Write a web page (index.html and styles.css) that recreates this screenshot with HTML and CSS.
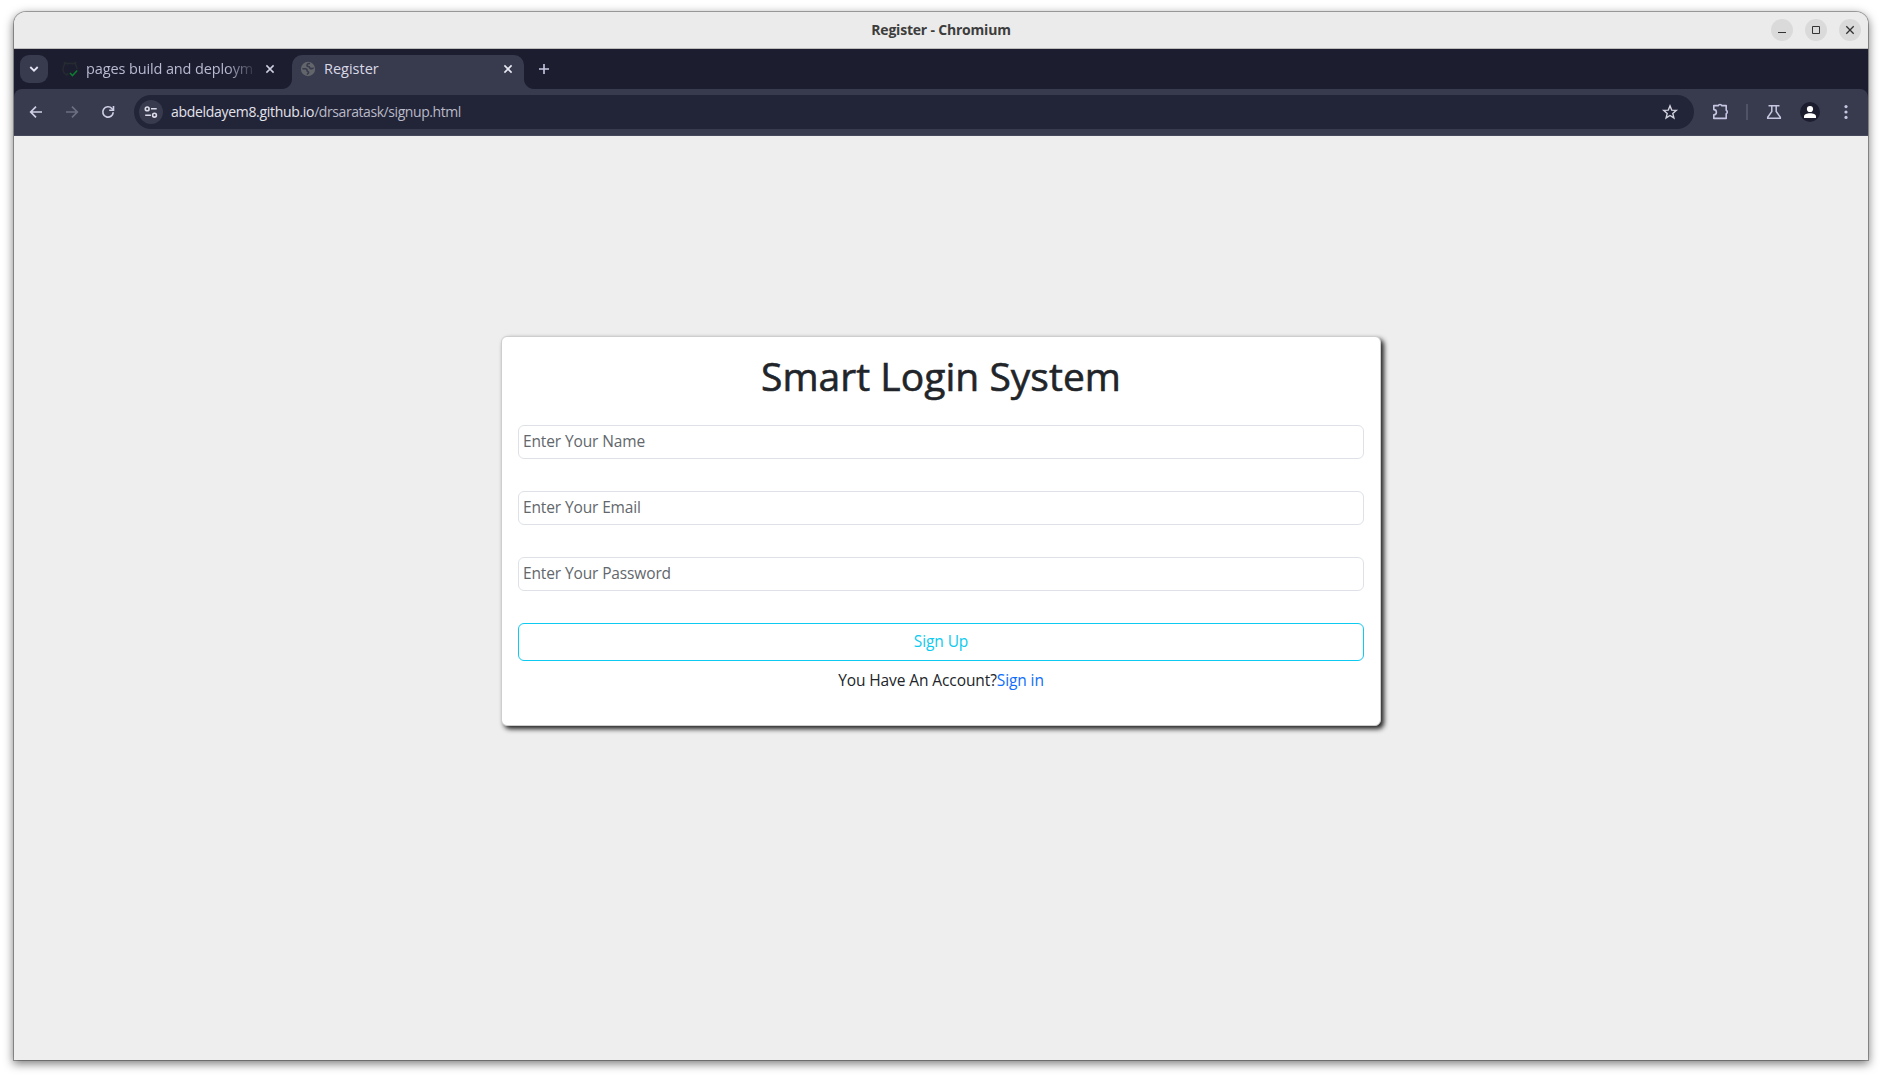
FILE: index.html
```html
<!DOCTYPE html>
<html lang="en">
<head>
<meta charset="utf-8">
<title>Register</title>
<link rel="stylesheet" href="styles.css">
</head>
<body>
<div class="window">
  <header class="titlebar">
    <span class="titlebar-side"></span>
    <span class="titlebar-text">Register - Chromium</span>
    <div class="titlebar-side window-buttons">
      <span class="window-button"><svg width="22" height="22" viewBox="0 0 22 22"><path d="M7 13.5h8" stroke="#333" fill="none"/></svg></span>
      <span class="window-button"><svg width="22" height="22" viewBox="0 0 22 22"><path d="M7.5 7.5h7v7h-7z" stroke="#333" fill="none"/></svg></span>
      <span class="window-button"><svg width="22" height="22" viewBox="0 0 22 22"><path d="M7.3 7.3l7.4 7.4M14.7 7.3l-7.4 7.4" stroke="#333" stroke-width="1.3" fill="none"/></svg></span>
    </div>
  </header>

  <div class="tabstrip">
    <span class="tab-search"><svg width="28" height="28" viewBox="0 0 28 28"><path d="M10.3 12l3.7 3.7 3.7-3.7" stroke="#e4e4f2" stroke-width="1.8" fill="none"/></svg></span>
    <div class="tab tab-inactive">
      <svg class="favicon" width="16" height="16" viewBox="0 0 16 16"><path d="M5.500 14.300v-2.200M5.300 14.300C2.500 13.200 1 10.800 1 8c0-1.800.7-3.200 1.500-4.200V1.700l2.600 1a8 8 0 0 1 5.800 0l2.600-1v2.100c.8 1 1.500 2.400 1.500 4.200" stroke="#262b31" stroke-width="1.500" fill="none"/><path d="M8 12l2.500 2.600 4.700-5" stroke="#0f7b30" stroke-width="1.500" fill="none"/></svg>
      <span class="tab-title">pages build and deploym</span>
      <svg class="tab-close" width="16" height="16" viewBox="0 0 16 16"><path d="M4.400 4.400l7.200 7.200M11.600 4.400l-7.200 7.200" stroke="#cfcfe2" stroke-width="1.500"/></svg>
    </div>
    <div class="tab tab-active">
      <svg class="favicon" width="16" height="16" viewBox="0 0 16 16"><circle cx="8" cy="8" r="7.200" fill="#62656a"/><path d="M10 2.500C8 2.200 7 3.200 7 4.400c0 1.300 1.200.8 2 1.300.9.600.5 1.700 1.700 1.900 1.200.2 1.800-.5 3-.3M2.400 7.800h2.700c1.600 0 2 .9 2 1.900s1.500.4 1.500 1.600c0 1-.9 1.200-1.400 2.300" stroke="#383a4e" stroke-width="1.600" fill="none"/></svg>
      <span class="tab-title">Register</span>
      <svg class="tab-close" width="16" height="16" viewBox="0 0 16 16"><path d="M4.400 4.400l7.200 7.200M11.600 4.400l-7.200 7.200" stroke="#e9e9f3" stroke-width="1.600"/></svg>
    </div>
    <svg class="new-tab" width="16" height="16" viewBox="0 0 16 16"><path d="M3 8h10M8 3v10" stroke="#c9c9e4" stroke-width="1.600"/></svg>
  </div>

  <div class="toolbar-wrap">
  <nav class="toolbar">
    <svg width="20" height="20" viewBox="0 0 20 20"><path d="M16 10H5M10 4.700L4.700 10l5.300 5.300" stroke="#cfcfe6" stroke-width="1.700" fill="none"/></svg>
    <svg width="20" height="20" viewBox="0 0 20 20"><path d="M4 10h11M10 4.700l5.300 5.300-5.300 5.300" stroke="#6c6e80" stroke-width="1.700" fill="none"/></svg>
    <svg width="20" height="20" viewBox="0 0 20 20"><path d="M15.200 10.200A5.200 5.200 0 1 1 13.900 6.500l1.500 1.500" stroke="#cfcfe6" stroke-width="1.700" fill="none"/><path d="M15.500 4v4.300h-4.300" stroke="#cfcfe6" stroke-width="1.600" fill="none"/></svg>
    <div class="omnibox">
      <span class="site-info"><svg width="24" height="24" viewBox="0 0 24 24"><g stroke="#dcdce9" stroke-width="1.600" fill="none"><circle cx="8.200" cy="8.900" r="1.900"/><path d="M12 8.800h5.700M6.200 15.200h5.700"/><circle cx="15.500" cy="15.200" r="1.900"/></g></svg></span>
      <span class="url"><span class="url-host">abdeldayem8.github.io</span><span class="url-path">/drsaratask/signup.html</span></span>
      <svg width="18" height="18" viewBox="0 0 18 18"><path d="M9 2.800l1.700 4.300 4.600.3-3.500 3 1.100 4.500L9 12.500l-3.900 2.400 1.100-4.500-3.500-3 4.600-.3z" stroke="#d3d3df" stroke-width="1.400" fill="none"/></svg>
    </div>
    <div class="actions">
      <svg width="20" height="20" viewBox="0 0 20 20"><path d="M3.800 3.600h4.400a1.900 1.600 0 0 1 3.600 0h4.400v4.600a1.600 1.900 0 0 1 0 3.600V16.400H3.800v-3.600a2.600 2.600 0 0 0 0-5.200z" stroke="#c6c6e2" stroke-width="1.600" stroke-linejoin="round" fill="none"/></svg>
      <span class="divider"></span>
      <svg width="20" height="20" viewBox="0 0 20 20"><path d="M4.500 3.800h11M7.800 4v5.500L3.700 15.200v1.100h12.600v-1.100L12.200 9.500V4" stroke="#c6c6e2" stroke-width="1.500" fill="none"/></svg>
      <svg width="20" height="20" viewBox="0 0 20 20"><circle cx="10" cy="10" r="10" fill="#1c1e30"/><circle cx="10" cy="7" r="3.100" fill="#fff"/><path d="M4 16v-1.500c0-2.200 3-3.300 6-3.300s6 1.100 6 3.300V16z" fill="#fff"/></svg>
      <svg width="20" height="20" viewBox="0 0 20 20" fill="#c6c6e2"><circle cx="10" cy="4.600" r="1.600"/><circle cx="10" cy="10" r="1.600"/><circle cx="10" cy="15.400" r="1.600"/></svg>
    </div>
  </nav>
  </div>

  <main class="page">
    <form class="card">
      <h1>Smart Login System</h1>
      <input type="text" placeholder="Enter Your Name">
      <input type="email" placeholder="Enter Your Email">
      <input type="password" placeholder="Enter Your Password">
      <button type="button">Sign Up</button>
      <p>You Have An Account?<a href="#">Sign in</a></p>
    </form>
  </main>
</div>
</body>
</html>
```
FILE: styles.css
```css
* { box-sizing: border-box; }
body {
  margin: 0;
  height: 1077px;
  padding: 12px 14px 17px;
  background: #fff;
  overflow: hidden;
  font-family: "Open Sans", "Noto Sans", sans-serif;
}
svg { display: block; flex: none; }
.window {
  height: 1048px;
  width: 1854px;
  display: flex;
  flex-direction: column;
  border-radius: 12px 12px 0 0;
  background: #eee;
  box-shadow: 0 0 0 1px rgba(0, 0, 0, .3), 0 3px 10px 1px rgba(0, 0, 0, .5);
}
.titlebar {
  height: 37px;
  flex: none;
  display: flex;
  align-items: center;
  border-bottom: 1px solid #bdbdbd;
  border-radius: 12px 12px 0 0;
  background: #ebebeb;
  padding-right: 7px;
}
.titlebar-side { flex: 1; }
.titlebar-text {
  font-size: 14px;
  font-weight: 700;
  letter-spacing: -.2px;
  line-height: 20px;
  color: #3d3d3d;
  padding: 0 0 1px 7px;
}
.window-buttons { display: flex; justify-content: flex-end; gap: 12px; }
.window-button { width: 22px; height: 22px; border-radius: 50%; background: #dadada; }

.tabstrip {
  height: 40px;
  flex: none;
  display: flex;
  align-items: flex-start;
  background: #1c1e2f;
  padding: 6px 0 0 6px;
}
.tab-search { width: 28px; height: 28px; border-radius: 9px; background: #383a4e; }
.tab { height: 34px; display: flex; align-items: center; padding-bottom: 6px; }
.tab-inactive { width: 244px; padding-left: 14px; }
.tab-active {
  width: 232px;
  padding-left: 8px;
  border-radius: 10px 10px 0 0;
  background: #383a4e;
  position: relative;
}
.tab-active::before,
.tab-active::after {
  content: "";
  position: absolute;
  bottom: 0;
  width: 10px;
  height: 10px;
}
.tab-active::before { left: -10px; background: radial-gradient(circle at 0 0, transparent 9.5px, #383a4e 10.5px); }
.tab-active::after { right: -10px; background: radial-gradient(circle at 100% 0, transparent 9.5px, #383a4e 10.5px); }
.tab-title {
  margin-left: 8px;
  font-size: 14.5px;
  line-height: 20px;
  white-space: nowrap;
}
.tab-inactive .tab-title {
  width: 172px;
  letter-spacing: -.12px;
  color: #b9b9d2;
  -webkit-mask-image: linear-gradient(90deg, #000 140px, transparent 172px);
  mask-image: linear-gradient(90deg, #000 140px, transparent 172px);
}
.tab-active .tab-title { width: 176px; color: #d9d9e6; }
.tab-inactive .tab-close { margin-left: 4px; }
.new-tab { margin: 6px 0 0 12px; }

.toolbar-wrap { background: #1c1e2f; flex: none; }
.toolbar {
  height: 47px;
  display: flex;
  align-items: center;
  gap: 16px;
  padding: 0 12px 1px;
  border-radius: 8px 8px 0 0;
  background: #383a4e;
  border-bottom: 1px solid #46475a;
}
.omnibox {
  flex: 1;
  height: 34px;
  display: flex;
  align-items: center;
  padding: 0 15px 0 5px;
  border-radius: 17px;
  background: #222437;
}
.site-info { width: 24px; height: 24px; border-radius: 50%; background: #383a4e; }
.url { flex: 1; margin-left: 8px; font-size: 14px; line-height: 20px; white-space: nowrap; }
.url-host { color: #e3e3ec; letter-spacing: -.31px; }
.url-path { color: #b9bac8; letter-spacing: -.43px; }
.actions { display: flex; align-items: center; gap: 16px; }
.divider { width: 2px; height: 16px; background: #505266; }

.page { flex: 1; padding-top: 200px; background: #eee; }
.card {
  width: 880px;
  height: 390px;
  margin: 0 auto;
  padding: 15px 16px 16px;
  display: flex;
  flex-direction: column;
  border: 1px solid #cecece;
  border-radius: 6px;
  background: #fff;
  box-shadow: 3px 3px 5px #222;
}
.card h1 {
  margin: 0 0 25px;
  text-align: center;
  font-size: 39px;
  font-weight: 400;
  line-height: 48px;
  letter-spacing: .03px;
  color: #212529;
  -webkit-text-stroke: .6px #212529;
}
.card input {
  height: 34px;
  margin: 0 0 32px;
  padding: 0 4px 2px;
  border: 1px solid #dee2e6;
  border-radius: 6px;
  background: #fff;
  font: 15.5px/24px "Open Sans", "Noto Sans", sans-serif;
  letter-spacing: -.13px;
}
.card input::placeholder { color: #62676c; opacity: 1; }
.card button {
  height: 38px;
  padding: 0 0 2px;
  border: 1px solid #0dcaf0;
  border-radius: 6px;
  background: transparent;
  color: #0dcaf0;
  font: 15.5px/24px "Open Sans", "Noto Sans", sans-serif;
  letter-spacing: -.09px;
}
.card p {
  margin: 7px 0 0;
  text-align: center;
  font-size: 15.5px;
  line-height: 24px;
  letter-spacing: -.1px;
  color: #212529;
}
.card a { color: #0d6efd; text-decoration: none; }
```
